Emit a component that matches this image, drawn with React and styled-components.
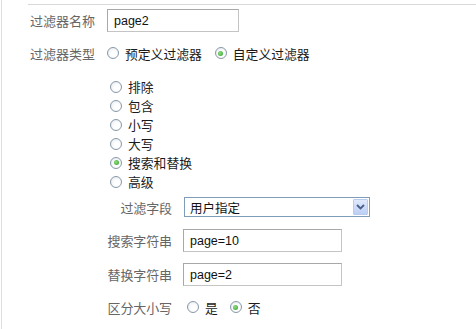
import React from "react";
import styled, { createGlobalStyle } from "styled-components";

const Global = createGlobalStyle`
  html, body { margin: 0; padding: 0; background: #fff; }
  body {
    font-family: "Noto Sans CJK SC", "Liberation Sans", sans-serif;
    font-size: 12px;
    color: #222;
  }
`;

const Frame = styled.div`
  box-sizing: border-box;
  width: 476px;
  height: 329px;
  margin-left: 1px;
  border-left: 1px solid #dedede;
  padding-top: 4px;
  overflow: hidden;
`;

const TopRule = styled.div`
  margin-left: 26px;
  border-top: 1px solid #d8d8d8;
`;

const Form = styled.div`
  padding-left: 28px;
  display: flex;
  flex-direction: column;
`;

const Row = styled.div`
  display: grid;
  grid-template-columns: ${(p) => p.$labelWidth || 65}px auto;
  column-gap: ${(p) => p.$gap || 12}px;
  align-items: center;
  margin-top: ${(p) => p.$top || 0}px;
  margin-left: ${(p) => p.$indent || 0}px;
  height: ${(p) => p.$height || 20}px;
`;

const Label = styled.span`
  color: #666;
  font-size: 13px;
  letter-spacing: ${(p) => (p.$right ? "-0.1px" : "0")};
  white-space: nowrap;
  text-align: ${(p) => (p.$right ? "right" : "left")};
`;

const TextBox = styled.div`
  box-sizing: border-box;
  width: ${(p) => p.$width}px;
  height: ${(p) => p.$height || 22}px;
  border: 1px solid #c4c4c4;
  border-top-color: #a8a8a8;
  border-left-color: #a8a8a8;
  background: #fff;
  padding-left: 6px;
  display: flex;
  align-items: center;
  font-family: "Liberation Sans", Arial, sans-serif;
  font-size: 12.5px;
  color: #111;
`;

const SelectBox = styled.div`
  box-sizing: border-box;
  width: 186px;
  height: 20px;
  border: 1px solid #7f9db9;
  background: #fff;
  display: flex;
  align-items: center;
  justify-content: space-between;
  padding: 0 1px 0 5px;
  font-size: 12.5px;
  color: #111;
`;

const DropButton = styled.span`
  box-sizing: border-box;
  width: 15px;
  height: 16px;
  border: 1px solid #b9cbee;
  border-radius: 1px;
  background: linear-gradient(#e0e9fd, #bccff5);
  display: flex;
  align-items: center;
  justify-content: center;
`;

const RadioGroup = styled.div`
  display: flex;
  align-items: center;
  gap: ${(p) => p.$gap || 14}px;
`;

const RadioList = styled.div`
  display: flex;
  flex-direction: column;
  margin-left: 80px;
  margin-top: 14px;
`;

const Option = styled.label`
  display: flex;
  align-items: center;
  gap: 6px;
  height: ${(p) => p.$height || 19}px;
  color: #1a1a1a;
  font-size: 12.8px;
  white-space: nowrap;
`;

const RadioDot = styled.span`
  box-sizing: border-box;
  width: 12px;
  height: 12px;
  border-radius: 50%;
  border: 1px solid #8898a8;
  background: radial-gradient(circle at 60% 60%, #ffffff 30%, #e2e6ec 100%);
  display: flex;
  align-items: center;
  justify-content: center;
  flex: none;
  &::after {
    content: "";
    display: ${(p) => (p.$checked ? "block" : "none")};
    width: 5px;
    height: 5px;
    border-radius: 50%;
    background: radial-gradient(circle at 40% 40%, #8fe07f, #2f9a2a);
  }
`;

const SubForm = styled.div`
  display: flex;
  flex-direction: column;
`;

const Radio = ({ checked, children, height }) => (
  <Option $height={height}>
    <RadioDot $checked={checked} />
    {children}
  </Option>
);

const Chevron = () => (
  <svg width="9" height="6" viewBox="0 0 9 6">
    <path d="M1 1 L4.5 4.5 L8 1" fill="none" stroke="#4a5f8a" strokeWidth="1.8" />
  </svg>
);

export default function App() {
  return (
    <>
      <Global />
      <Frame>
        <TopRule />
        <Form>
          <Row $top={4} $height={23}>
            <Label>过滤器名称</Label>
            <TextBox $width={132} $height={23}>page2</TextBox>
          </Row>
          <Row $top={11} $height={20}>
            <Label>过滤器类型</Label>
            <RadioGroup $gap={13}>
              <Radio>预定义过滤器</Radio>
              <Radio checked>自定义过滤器</Radio>
            </RadioGroup>
          </Row>
          <RadioList>
            <Radio>排除</Radio>
            <Radio>包含</Radio>
            <Radio>小写</Radio>
            <Radio>大写</Radio>
            <Radio checked>搜索和替换</Radio>
            <Radio>高级</Radio>
          </RadioList>
          <SubForm>
            <Row $top={6} $height={20} $indent={76} $labelWidth={66}>
              <Label $right>过滤字段</Label>
              <SelectBox>
                用户指定
                <DropButton>
                  <Chevron />
                </DropButton>
              </SelectBox>
            </Row>
            <Row $top={12} $height={23} $indent={76} $labelWidth={66} $gap={11}>
              <Label $right>搜索字符串</Label>
              <TextBox $width={159} $height={23}>page=10</TextBox>
            </Row>
            <Row $top={11} $height={23} $indent={76} $labelWidth={66} $gap={11}>
              <Label $right>替换字符串</Label>
              <TextBox $width={159} $height={23}>page=2</TextBox>
            </Row>
            <Row $top={11} $height={20} $indent={76} $labelWidth={66} $gap={15}>
              <Label $right>区分大小写</Label>
              <RadioGroup $gap={12}>
                <Radio height={20}>是</Radio>
                <Radio checked height={20}>否</Radio>
              </RadioGroup>
            </Row>
          </SubForm>
        </Form>
      </Frame>
    </>
  );
}
